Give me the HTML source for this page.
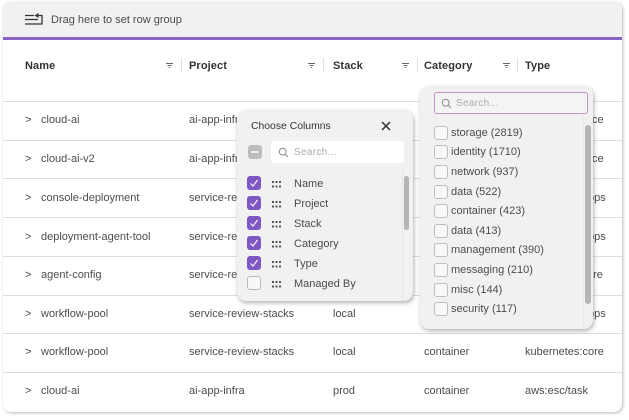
<!DOCTYPE html>
<html><head><meta charset="utf-8">
<style>
html,body{margin:0;padding:0;background:#fff;}
body{width:629px;height:420px;position:relative;overflow:hidden;font-family:"Liberation Sans",sans-serif;color:#4a4a4a;font-size:11px;}
.a{position:absolute;white-space:nowrap;}
.t{position:absolute;white-space:nowrap;line-height:14px;font-size:11px;color:#4c4c4c;}
.h{position:absolute;white-space:nowrap;line-height:14px;font-size:11px;font-weight:bold;color:#333;top:59px;letter-spacing:.1px;}
.l{position:absolute;left:3px;width:619px;height:1px;background:#dedede;}
.s{position:absolute;top:58px;width:1px;height:15px;background:#e2e2e2;}
.f{position:absolute;top:63px;width:7px;height:5px;}
.cb{position:absolute;width:12px;height:12px;border:1px solid #bdbdbd;border-radius:3px;background:#f8f8f8;}
.on{background:#7e57c2;border-color:#7e57c2;}
.on svg{position:absolute;left:0;top:0;}
.g{position:absolute;left:272px;width:9px;height:7px;}
</style></head><body>
<div class="a" style="left:3px;top:2px;width:619px;height:410px;background:#fff;border-radius:8px;box-shadow:1px 1px 3px rgba(0,0,0,.28);"></div>
<div class="a" style="left:3px;top:2px;width:619px;height:35px;background:#f1f1f1;border-radius:8px 8px 0 0;"></div>
<div class="a" style="left:3px;top:37px;width:619px;height:3px;background:#8664c4;"></div>
<svg class="a" style="left:24px;top:13px;" width="20" height="13" viewBox="0 0 20 13"><g stroke="#333" stroke-width="1.3" fill="none"><path d="M1 2.5H10M1 6.5H14M1 11H18M18 11.6V2.5H14"/></g><path d="M10.5 2.5L14.5 0V5Z" fill="#333"/></svg>
<div class="t" style="left:51px;top:12.5px;">Drag here to set row group</div>

<div class="h" style="left:25px;">Name</div>
<div class="h" style="left:189px;">Project</div>
<div class="h" style="left:333px;">Stack</div>
<div class="h" style="left:424px;">Category</div>
<div class="h" style="left:525px;">Type</div>
<div class="s" style="left:181px;"></div><div class="s" style="left:323px;"></div><div class="s" style="left:417px;"></div><div class="s" style="left:517px;"></div>
<svg class="f" style="left:166px;" viewBox="0 0 7 5"><path d="M0 .5H7M1.5 2.5H5.5M2.8 4.5H4.2" stroke="#666" stroke-width="1"/></svg>
<svg class="f" style="left:308px;" viewBox="0 0 7 5"><path d="M0 .5H7M1.5 2.5H5.5M2.8 4.5H4.2" stroke="#666" stroke-width="1"/></svg>
<svg class="f" style="left:402px;" viewBox="0 0 7 5"><path d="M0 .5H7M1.5 2.5H5.5M2.8 4.5H4.2" stroke="#666" stroke-width="1"/></svg>
<svg class="f" style="left:503px;" viewBox="0 0 7 5"><path d="M0 .5H7M1.5 2.5H5.5M2.8 4.5H4.2" stroke="#666" stroke-width="1"/></svg>

<div class="l" style="top:101px;"></div><div class="l" style="top:140px;"></div><div class="l" style="top:178px;"></div><div class="l" style="top:217px;"></div><div class="l" style="top:256px;"></div><div class="l" style="top:295px;"></div><div class="l" style="top:333px;"></div><div class="l" style="top:372px;"></div>

<div class="t" style="left:25px;top:113px;">&gt;</div><div class="t" style="left:41px;top:113px;">cloud-ai</div><div class="t" style="left:189px;top:113px;">ai-app-infra</div><div class="t" style="left:592px;top:113px;">ce</div>
<div class="t" style="left:25px;top:152px;">&gt;</div><div class="t" style="left:41px;top:152px;">cloud-ai-v2</div><div class="t" style="left:189px;top:152px;">ai-app-infra</div><div class="t" style="left:592px;top:152px;">ce</div>
<div class="t" style="left:25px;top:191px;">&gt;</div><div class="t" style="left:41px;top:191px;">console-deployment</div><div class="t" style="left:189px;top:191px;">service-review</div><div class="t" style="left:588px;top:191px;">ops</div>
<div class="t" style="left:25px;top:230px;">&gt;</div><div class="t" style="left:41px;top:230px;">deployment-agent-tool</div><div class="t" style="left:189px;top:230px;">service-review</div><div class="t" style="left:588px;top:230px;">ops</div>
<div class="t" style="left:25px;top:268px;">&gt;</div><div class="t" style="left:41px;top:268px;">agent-config</div><div class="t" style="left:189px;top:268px;">service-review</div><div class="t" style="left:587px;top:268px;">ore</div>
<div class="t" style="left:25px;top:307px;">&gt;</div><div class="t" style="left:41px;top:307px;">workflow-pool</div><div class="t" style="left:189px;top:307px;">service-review-stacks</div><div class="t" style="left:333px;top:307px;">local</div><div class="t" style="left:588px;top:307px;">ops</div>
<div class="t" style="left:25px;top:345px;">&gt;</div><div class="t" style="left:41px;top:345px;">workflow-pool</div><div class="t" style="left:189px;top:345px;">service-review-stacks</div><div class="t" style="left:333px;top:345px;">local</div><div class="t" style="left:424px;top:345px;">container</div><div class="t" style="left:525px;top:345px;">kubernetes:core</div>
<div class="t" style="left:25px;top:384px;">&gt;</div><div class="t" style="left:41px;top:384px;">cloud-ai</div><div class="t" style="left:189px;top:384px;">ai-app-infra</div><div class="t" style="left:333px;top:384px;">prod</div><div class="t" style="left:424px;top:384px;">container</div><div class="t" style="left:525px;top:384px;">aws:esc/task</div>

<!-- Choose Columns panel -->
<div class="a" style="left:237px;top:110px;width:176px;height:191px;background:#f1f1f1;border-radius:9px;box-shadow:1px 2px 4px rgba(0,0,0,.3);"></div>
<div class="t" style="left:251px;top:120px;font-size:10.4px;color:#333;">Choose Columns</div>
<svg class="a" style="left:381px;top:121px;" width="10" height="10" viewBox="0 0 10 10"><path d="M1 1L9 9M9 1L1 9" stroke="#333" stroke-width="1.5"/></svg>
<div class="a" style="left:248px;top:145px;width:14px;height:14px;background:#bdbdbd;border-radius:3px;"></div>
<div class="a" style="left:251px;top:151px;width:8px;height:2px;background:#eee;"></div>
<div class="a" style="left:271px;top:141px;width:133px;height:22px;background:#fff;border-radius:3px;"></div>
<svg class="a" style="left:278px;top:147px;" width="11" height="11" viewBox="0 0 11 11"><circle cx="4.7" cy="4.7" r="3.4" stroke="#888" fill="none"/><path d="M7.2 7.2L10 10" stroke="#888"/></svg>
<div class="t" style="left:294px;top:146px;font-size:10px;color:#aaa;letter-spacing:.3px;">Search...</div>
<div class="a" style="left:402px;top:168px;width:1px;height:133px;background:#e6e6e6;"></div>
<div class="a" style="left:404px;top:176px;width:5px;height:54px;background:#b5b5b5;border-radius:3px;"></div>

<div class="cb on" style="left:247px;top:176px;"><svg width="12" height="12" viewBox="0 0 12 12"><path d="M2.5 6.5L5 9L9.5 3" stroke="#fff" stroke-width="1.1" fill="none"/></svg></div>
<div class="cb on" style="left:247px;top:196px;"><svg width="12" height="12" viewBox="0 0 12 12"><path d="M2.5 6.5L5 9L9.5 3" stroke="#fff" stroke-width="1.1" fill="none"/></svg></div>
<div class="cb on" style="left:247px;top:216px;"><svg width="12" height="12" viewBox="0 0 12 12"><path d="M2.5 6.5L5 9L9.5 3" stroke="#fff" stroke-width="1.1" fill="none"/></svg></div>
<div class="cb on" style="left:247px;top:236px;"><svg width="12" height="12" viewBox="0 0 12 12"><path d="M2.5 6.5L5 9L9.5 3" stroke="#fff" stroke-width="1.1" fill="none"/></svg></div>
<div class="cb on" style="left:247px;top:256px;"><svg width="12" height="12" viewBox="0 0 12 12"><path d="M2.5 6.5L5 9L9.5 3" stroke="#fff" stroke-width="1.1" fill="none"/></svg></div>
<div class="cb" style="left:247px;top:276px;"></div>
<svg class="g" style="top:180.5px;" viewBox="0 0 9 7"><g fill="#555"><rect width="2" height="2"/><rect x="3.5" width="2" height="2"/><rect x="7" width="2" height="2"/><rect y="4.5" width="2" height="2"/><rect x="3.5" y="4.5" width="2" height="2"/><rect x="7" y="4.5" width="2" height="2"/></g></svg>
<svg class="g" style="top:200.5px;" viewBox="0 0 9 7"><g fill="#555"><rect width="2" height="2"/><rect x="3.5" width="2" height="2"/><rect x="7" width="2" height="2"/><rect y="4.5" width="2" height="2"/><rect x="3.5" y="4.5" width="2" height="2"/><rect x="7" y="4.5" width="2" height="2"/></g></svg>
<svg class="g" style="top:220.5px;" viewBox="0 0 9 7"><g fill="#555"><rect width="2" height="2"/><rect x="3.5" width="2" height="2"/><rect x="7" width="2" height="2"/><rect y="4.5" width="2" height="2"/><rect x="3.5" y="4.5" width="2" height="2"/><rect x="7" y="4.5" width="2" height="2"/></g></svg>
<svg class="g" style="top:240.5px;" viewBox="0 0 9 7"><g fill="#555"><rect width="2" height="2"/><rect x="3.5" width="2" height="2"/><rect x="7" width="2" height="2"/><rect y="4.5" width="2" height="2"/><rect x="3.5" y="4.5" width="2" height="2"/><rect x="7" y="4.5" width="2" height="2"/></g></svg>
<svg class="g" style="top:260.5px;" viewBox="0 0 9 7"><g fill="#555"><rect width="2" height="2"/><rect x="3.5" width="2" height="2"/><rect x="7" width="2" height="2"/><rect y="4.5" width="2" height="2"/><rect x="3.5" y="4.5" width="2" height="2"/><rect x="7" y="4.5" width="2" height="2"/></g></svg>
<svg class="g" style="top:280.5px;" viewBox="0 0 9 7"><g fill="#555"><rect width="2" height="2"/><rect x="3.5" width="2" height="2"/><rect x="7" width="2" height="2"/><rect y="4.5" width="2" height="2"/><rect x="3.5" y="4.5" width="2" height="2"/><rect x="7" y="4.5" width="2" height="2"/></g></svg>
<div class="t" style="left:294px;top:177px;">Name</div>
<div class="t" style="left:294px;top:197px;">Project</div>
<div class="t" style="left:294px;top:217px;">Stack</div>
<div class="t" style="left:294px;top:237px;">Category</div>
<div class="t" style="left:294px;top:257px;">Type</div>
<div class="t" style="left:294px;top:277px;">Managed By</div>

<!-- Category filter panel -->
<div class="a" style="left:420px;top:86px;width:173px;height:243px;background:#f1f1f1;border-radius:9px;box-shadow:1px 2px 4px rgba(0,0,0,.3);"></div>
<div class="a" style="left:434px;top:92px;width:152px;height:20px;background:#f4f4f4;border:1px solid #c792c9;border-radius:3px;"></div>
<svg class="a" style="left:441px;top:98px;" width="11" height="11" viewBox="0 0 11 11"><circle cx="4.7" cy="4.7" r="3.4" stroke="#888" fill="none"/><path d="M7.2 7.2L10 10" stroke="#888"/></svg>
<div class="t" style="left:456px;top:97px;font-size:10px;color:#aaa;letter-spacing:.3px;">Search...</div>
<div class="a" style="left:583px;top:117px;width:1px;height:212px;background:#e6e6e6;"></div>
<div class="a" style="left:585px;top:125px;width:6px;height:179px;background:#b5b5b5;border-radius:3px;"></div>

<div class="cb" style="left:434px;top:126px;"></div><div class="t" style="left:451px;top:126px;">storage (2819)</div>
<div class="cb" style="left:434px;top:145px;"></div><div class="t" style="left:451px;top:145px;">identity (1710)</div>
<div class="cb" style="left:434px;top:165px;"></div><div class="t" style="left:451px;top:165px;">network (937)</div>
<div class="cb" style="left:434px;top:185px;"></div><div class="t" style="left:451px;top:185px;">data (522)</div>
<div class="cb" style="left:434px;top:204px;"></div><div class="t" style="left:451px;top:204px;">container (423)</div>
<div class="cb" style="left:434px;top:224px;"></div><div class="t" style="left:451px;top:224px;">data (413)</div>
<div class="cb" style="left:434px;top:243px;"></div><div class="t" style="left:451px;top:243px;">management (390)</div>
<div class="cb" style="left:434px;top:263px;"></div><div class="t" style="left:451px;top:263px;">messaging (210)</div>
<div class="cb" style="left:434px;top:283px;"></div><div class="t" style="left:451px;top:283px;">misc (144)</div>
<div class="cb" style="left:434px;top:302px;"></div><div class="t" style="left:451px;top:302px;">security (117)</div>
</body></html>
